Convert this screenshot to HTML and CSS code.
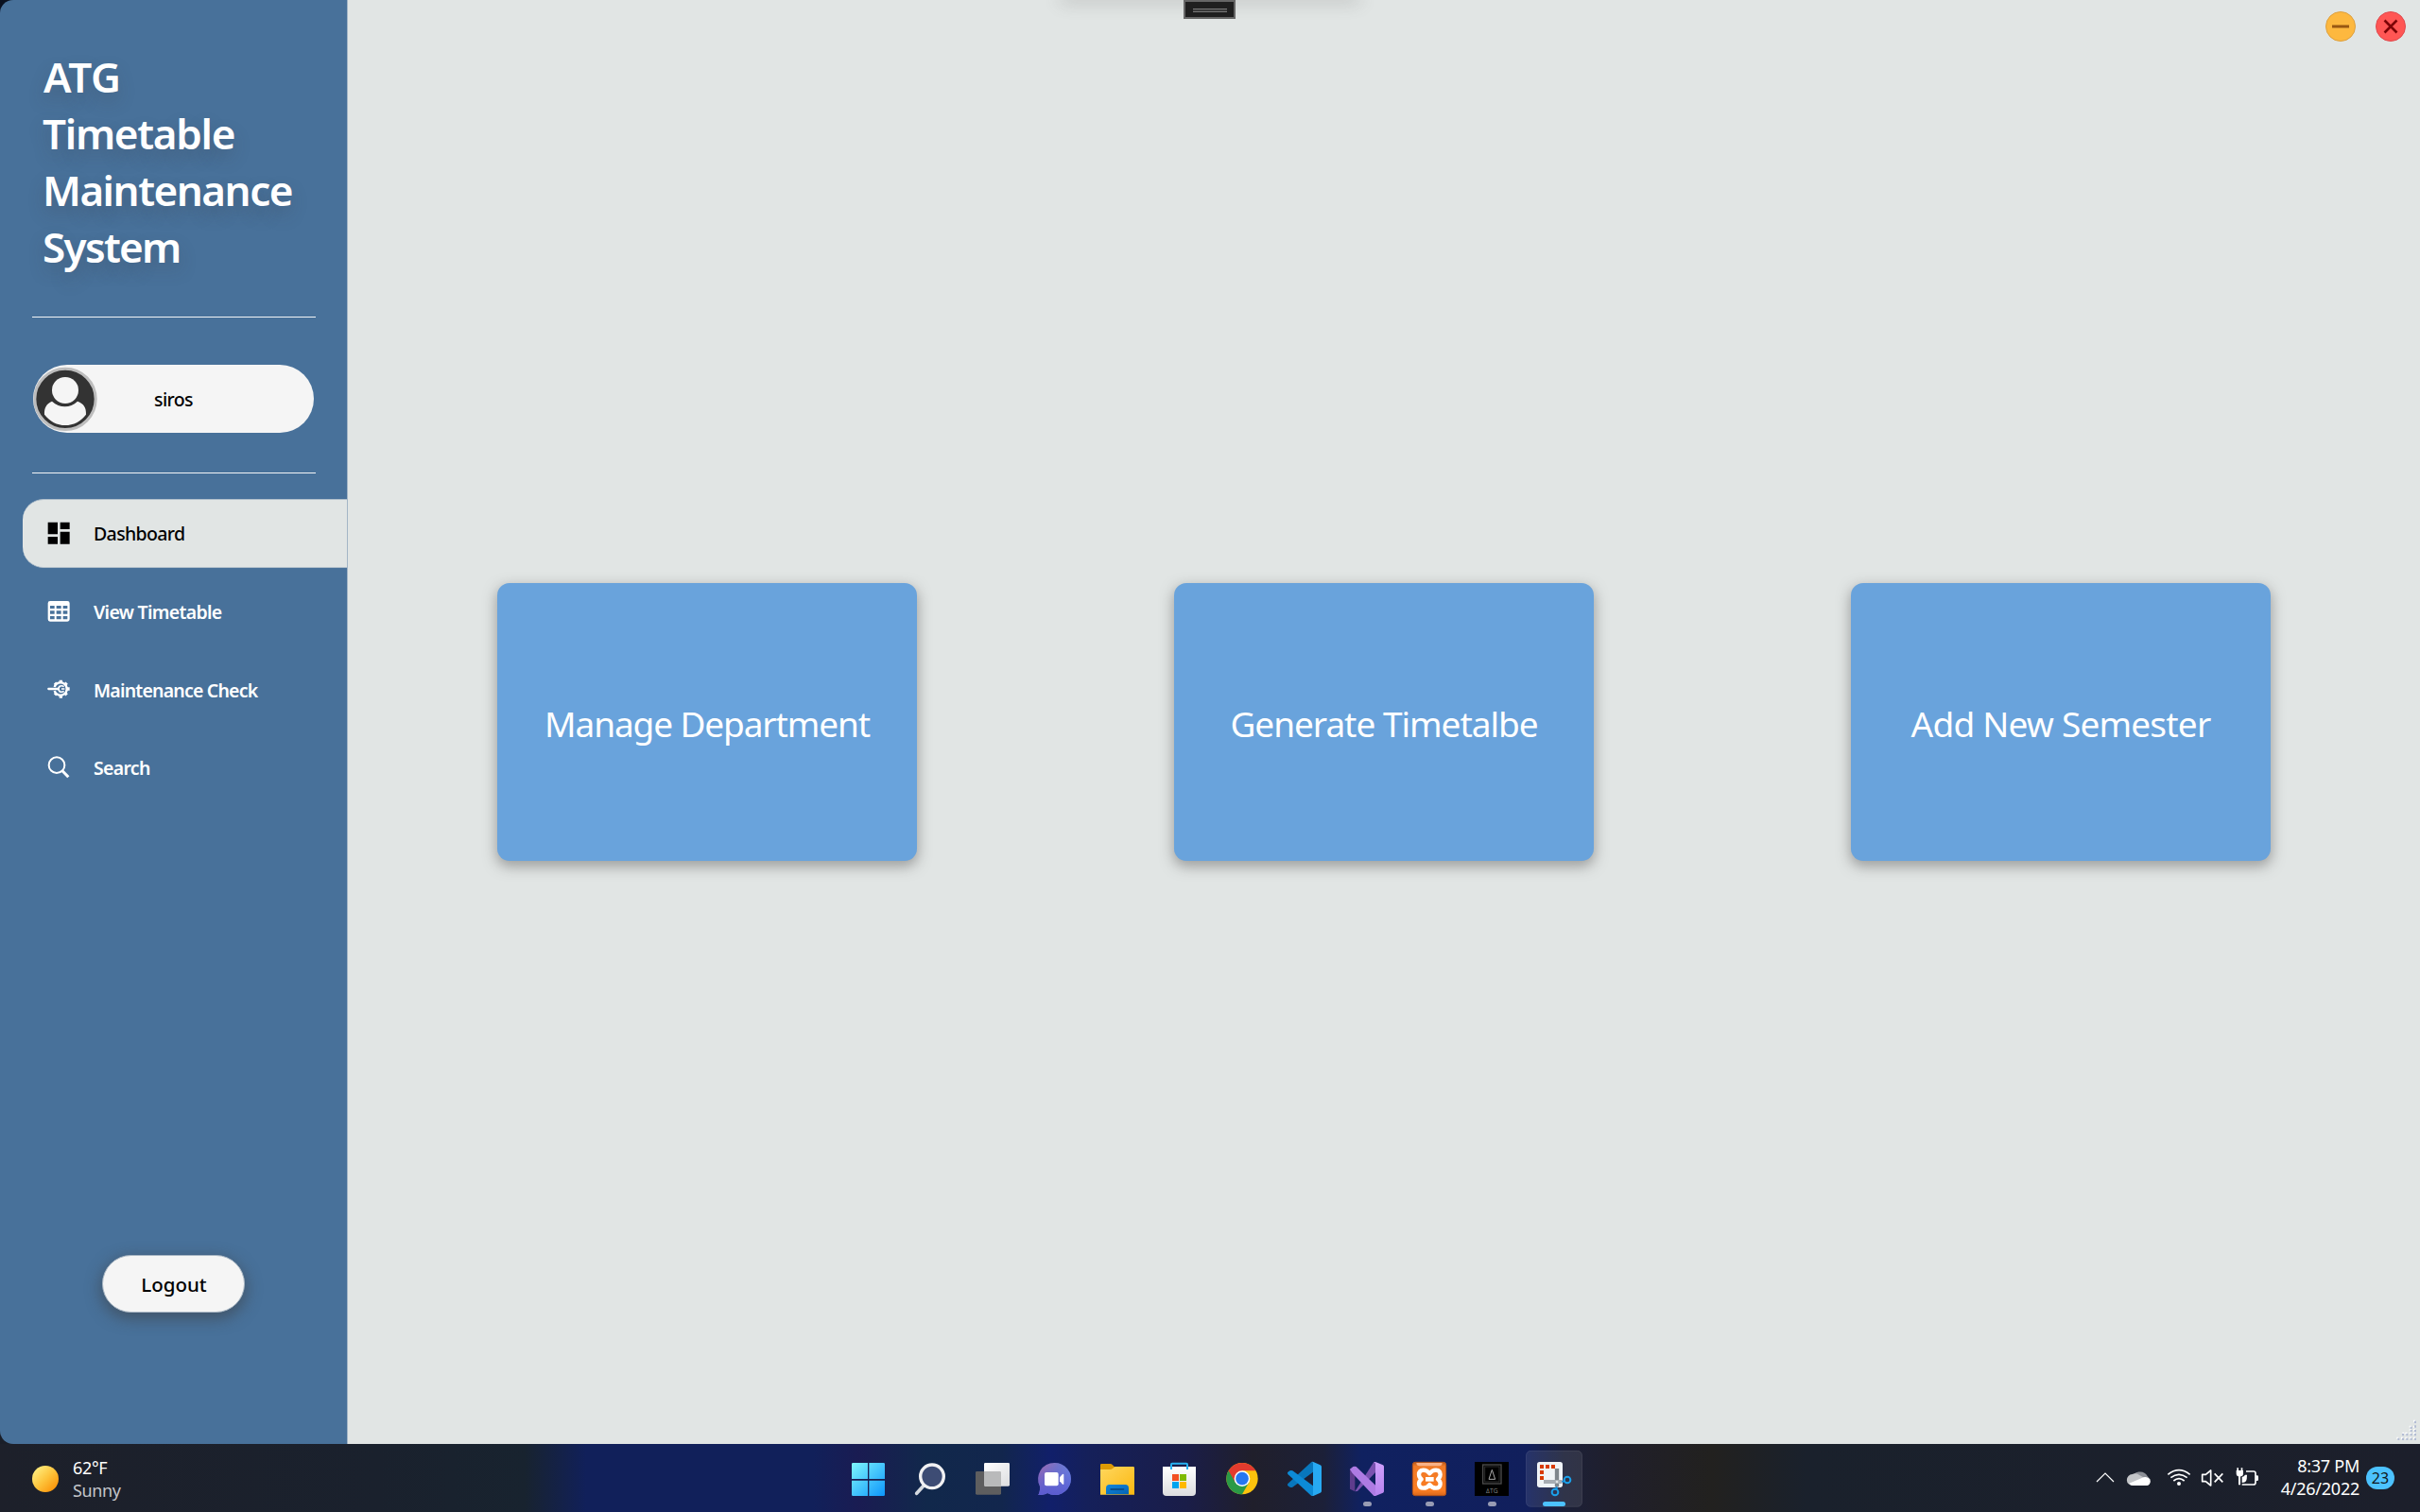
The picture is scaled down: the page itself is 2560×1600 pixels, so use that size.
FILE: index.html
```html
<!DOCTYPE html>
<html lang="en">
<head>
<meta charset="utf-8">
<title>ATG Timetable Maintenance System</title>
<link rel="stylesheet" href="styles.css">
</head>
<body>
<div class="desktop">
  <div class="window">
    <aside class="sidebar">
      <h1 class="title"><span class="t1">ATG</span><span class="t2">Timetable</span><span class="t3">Maintenance</span><span class="t4">System</span></h1>
      <div class="divider"></div>
      <div class="profile">
        <svg class="avatar" viewBox="105 1162 204 204"><circle cx="207" cy="1265" r="96.500" fill="#333" stroke="#bdbdbd" stroke-width="9"/><circle cx="207" cy="1237" r="42" fill="#f5f5f5"/><path d="M165 1272C148 1279 140 1292 141 1314C158 1336 181 1348 207 1348C233 1348 257 1336 273 1314C274 1292 266 1279 246 1272C222 1294 190 1294 165 1272Z" fill="#f5f5f5"/></svg>
        <span class="user">siros</span>
      </div>
      <div class="divider"></div>
      <nav class="menu">
        <a class="item active"><svg class="icon" viewBox="148 157 72 72"><path d="M150 159h31v38h-31zM189 159h30v22h-30zM150 205h31v23h-31zM189 189h30v39h-30z" fill="#000"/></svg><span class="m1">Dashboard</span></a>
        <a class="item"><svg class="icon" viewBox="148 405 72 72"><path fill-rule="evenodd" d="M157 408h55q7 0 7 7v51q0 7-7 7h-55q-7 0-7-7v-51q0-7 7-7zM157 423v9h14v-9zM177 423v9h15v-9zM198 423v9h14v-9zM157 439v10h14v-10zM177 439v10h15v-10zM198 439v10h14v-10zM157 456v10h14v-10zM177 456v10h15v-10zM198 456v10h14v-10z" fill="#fff"/></svg><span class="m2">View Timetable</span></a>
        <a class="item"><svg class="icon" viewBox="148 652 72 72" fill="none" stroke="#fff"><path d="M171 682A20 20 0 1 1 171 694" stroke-width="7"/><path d="M191 660v9M191 708v9M210 688h9M172 669l5 5M210 669l-5 5M172 707l5-5M210 707l-5-5" stroke-width="10"/><path d="M152 688h30" stroke-width="7" stroke-linecap="round"/><path d="M201 681q-7-5-14-1-7 8 0 16 7 4 14-1M193 688h10" stroke-width="5"/></svg><span class="m3">Maintenance Check</span></a>
        <a class="item"><svg class="icon" viewBox="148 899 72 72" fill="none" stroke="#fff"><circle cx="178" cy="928" r="25" stroke-width="6"/><path d="M196 946l19 20" stroke-width="9"/></svg><span class="m4">Search</span></a>
      </nav>
      <button class="logout"><span class="lo">Logout</span></button>
    </aside>
    <main class="main">
      <div class="controls">
        <svg class="ctl" viewBox="0 0 32 32"><circle cx="16" cy="16" r="15.500" fill="#fdb83f" stroke="#dda03f"/><path d="M7 16h18" stroke="#985712" stroke-width="3"/></svg>
        <svg class="ctl" viewBox="0 0 32 32"><circle cx="16" cy="16" r="15.500" fill="#ff5654" stroke="#df4a4e"/><path d="M9.500 9.500l13 13M22.500 9.500l-13 13" stroke="#7c0407" stroke-width="2.600"/></svg>
      </div>
      <div class="cards">
        <div class="card"><span class="c1">Manage Department</span></div>
        <div class="card"><span class="c2">Generate Timetalbe</span></div>
        <div class="card"><span class="c3">Add New Semester</span></div>
      </div>
      <svg class="grip" viewBox="1062 36 72 72"><g fill="#fff"><path d="M1119 38h6v6h-6zM1106 56h6v6h-6zM1119 56h6v6h-6zM1119 67h6v6h-6zM1106 67h6v6h-6zM1093 77h6v6h-6zM1084 77h6v6h-6zM1106 77h6v6h-6zM1119 77h6v6h-6zM1066 92h6v6h-6zM1080 92h6v6h-6zM1093 92h6v6h-6zM1106 92h6v6h-6zM1119 92h6v6h-6z"/></g><g fill="#b3bdd4"><path d="M1122 41h6v7h-6zM1122 55h6v7h-6zM1109 59h6v7h-6zM1122 69h6v7h-6zM1109 69h6v7h-6zM1083 81h6v7h-6zM1096 81h6v7h-6zM1109 81h6v7h-6zM1122 81h6v7h-6zM1069 95h6v7h-6zM1083 95h6v7h-6zM1096 95h6v7h-6zM1109 95h6v7h-6zM1122 95h6v7h-6z"/></g></svg>
    </main>
    <div class="topshade"></div>
    <div class="handle"><i></i></div>
  </div>
  <footer class="taskbar">
    <div class="weather">
      <div class="sun"></div>
      <div class="wtext"><span class="w1">62°F</span><span class="w2">Sunny</span></div>
    </div>
    <div class="apps">
      <svg viewBox="15 24 198 216"><defs><linearGradient id="win" gradientUnits="userSpaceOnUse" x1="63" y1="84" x2="168" y2="189"><stop stop-color="#7ef6fd"/><stop offset="1" stop-color="#0d96fb"/></linearGradient></defs><path d="M67 84h47v51H63V88q0-4 4-4zM118 84h46q4 0 4 4v47h-50zM63 140h51v49H67q-4 0-4-4zM118 140h50v45q0 4-4 4h-46z" fill="url(#win)"/></svg>
      <svg viewBox="213 24 198 216"><path d="M291 157l-22 24" stroke="#d5d9df" stroke-width="11" stroke-linecap="round"/><circle cx="318" cy="127" r="37" fill="#3d4c74" stroke="#f1f1f3" stroke-width="10"/></svg>
      <svg viewBox="411 24 198 216"><defs><linearGradient id="tv" x2="1" y2="1"><stop stop-color="#fff"/><stop offset="1" stop-color="#dcdde0"/></linearGradient></defs><rect x="456" y="111" width="81" height="74" rx="4" fill="#5e5e5f"/><rect x="483" y="84" width="81" height="74" rx="4" fill="url(#tv)"/><path d="M483 111h50q4 0 4 4v43h-50q-4 0-4-4z" fill="#b9babb"/></svg>
      <svg viewBox="609 24 198 216"><defs><linearGradient id="chat" x1="0" y1=".2" x2="1" y2=".6"><stop stop-color="#a06bb0"/><stop offset=".5" stop-color="#7075cb"/><stop offset="1" stop-color="#6a8ae8"/></linearGradient><linearGradient id="chat2" x2="0" y2="1"><stop stop-color="#5b5bd0" stop-opacity="0"/><stop offset="1" stop-color="#5b5bd0"/></linearGradient></defs><path d="M706 84a51 51 0 1 1-22 96q-10 6-29 6q6-10 5-28a51 51 0 0 1 46-74z" fill="url(#chat)"/><path d="M706 84a51 51 0 1 1-22 96q-10 6-29 6q6-10 5-28a51 51 0 0 1 46-74z" fill="url(#chat2)"/><rect x="675" y="114" width="44" height="43" rx="6" fill="#fff"/><path d="M723 130l9-10q4-2 4 3v26q0 5-4 3l-9-10z" fill="#fff"/></svg>
      <svg viewBox="807 24 198 216"><defs><linearGradient id="fold" x2="1" y2="1"><stop stop-color="#ffd75e"/><stop offset="1" stop-color="#fbb811"/></linearGradient><linearGradient id="fb" x2="1" y2="1"><stop stop-color="#0f86dc"/><stop offset="1" stop-color="#0563b4"/></linearGradient></defs><path d="M852 90q0-3 4-3h27q5 0 8 4l6 6v14h-45z" fill="#dd9a05"/><path d="M852 105h30q6 0 10-4l6-5h58q4 0 4 4v85H852z" fill="url(#fold)"/><path d="M870 184v-20q0-11 11-11h50q11 0 11 11v20z" fill="url(#fb)"/><rect x="883" y="165" width="45" height="6" rx="3" fill="#074f8f"/></svg>
      <svg viewBox="1005 24 198 216"><defs><linearGradient id="bag" x2="0" y2="1"><stop stop-color="#fff"/><stop offset="1" stop-color="#dcdddf"/></linearGradient></defs><path d="M1050 96h105v81q0 12-12 12h-81q-12 0-12-12z" fill="url(#bag)"/><path d="M1077 105V89q0-3 3-3h45q3 0 3 3v16" fill="none" stroke="#27b2f2" stroke-width="6"/><path d="M1080 120h21v21h-21z" fill="#f25022"/><path d="M1104 120h21v21h-21z" fill="#7fba00"/><path d="M1080 144h21v21h-21z" fill="#00a4ef"/><path d="M1104 144h21v21h-21z" fill="#ffb900"/></svg>
      <svg viewBox="3 24 198 216"><circle cx="102" cy="134" r="50" fill="#fdc30d"/><path d="M102 134L58.700 109A50 50 0 0 0 102 184L123.600 146.500z" fill="#2a9a46"/><path d="M58.700 109A50 50 0 0 1 145.300 109H102L80.400 146.500z" fill="#e33b2e"/><circle cx="102" cy="134" r="25" fill="#fff"/><circle cx="102" cy="134" r="20.500" fill="#2777f0"/></svg>
      <svg viewBox="201 24 198 216"><path d="M248 149L322 81L327 84V113L262 161Q256 164 250 159L246 155Q245 152 248 149z" fill="#0877bd"/><path d="M248 121L322 189L327 186V157L262 109Q256 106 250 111L246 115Q245 118 248 121z" fill="#0c8ad6"/><path d="M322 81Q325 80 328 81L350 91Q354 93 354 97V173Q354 177 350 179L328 189Q325 190 322 188L327 186V84z" fill="#27a9f2"/></svg>
      <svg viewBox="399 24 198 216"><defs><linearGradient id="vsr" x2="0" y2="1"><stop stop-color="#cfa0fb"/><stop offset="1" stop-color="#b883ee"/></linearGradient></defs><path d="M444 104l16-8v79l-16-8z" fill="#5f3c8c"/><path d="M460 175l60-94 6 4v28l-58 61z" fill="#7a52b0"/><path d="M444 104l10-8q5-2 10 0l62 60v31l-6 2-68-72z" fill="#ae7be3"/><path d="M520 81q3-1 7 1l22 9q3 2 3 5v78q0 3-3 5l-22 9q-4 2-7 1l5-6V86z" fill="url(#vsr)"/><rect x="486" y="207" width="27" height="15" rx="7.500" fill="#989cb4"/></svg>
      <svg viewBox="597 24 198 216"><defs><linearGradient id="xa" x2="0" y2="1"><stop stop-color="#b95a1c"/><stop offset=".12" stop-color="#f07a27"/><stop offset=".85" stop-color="#fb7d22"/><stop offset="1" stop-color="#d9661a"/></linearGradient></defs><rect x="643" y="82" width="106" height="106" rx="8" fill="url(#xa)" stroke="#b4521a" stroke-width="3"/><path d="M655 84h82q0 10-10 10h-62q-10 0-10-10z" fill="#f9b287"/><path d="M697 118Q690 107 677 107Q663 108 663 121Q663 130 671 136Q663 142 663 151Q664 164 677 164Q690 164 697 153Q704 164 717 164Q730 164 731 151Q731 142 723 136Q731 130 731 121Q731 108 717 107Q704 107 697 118Z" fill="none" stroke="#fff" stroke-width="13" stroke-linejoin="round"/><path d="M684 136h26" stroke="#fff" stroke-width="14"/><rect x="684" y="207" width="27" height="15" rx="7.500" fill="#989cb4"/></svg>
      <svg viewBox="795 24 198 216"><rect x="840" y="81" width="108" height="108" fill="#000"/><rect x="866" y="90" width="58" height="60" fill="none" stroke="#4b4b4b" stroke-width="4"/><rect x="872" y="96" width="46" height="48" fill="none" stroke="#2d2d2d" stroke-width="3"/><path d="M895 106l-10 30h20z" fill="none" stroke="#aaa" stroke-width="3"/><text x="876" y="181" class="atg" textLength="38">∆TG</text><rect x="882" y="207" width="27" height="15" rx="7.500" fill="#989cb4"/></svg>
      <svg viewBox="993 24 198 216"><rect x="1003.500" y="46" width="177" height="177" rx="14" fill="#fff" fill-opacity=".09" stroke="#fff" stroke-opacity=".1" stroke-width="3"/><rect x="1038" y="81" width="81" height="81" rx="8" fill="#f0f4f7"/><path d="M1047 90h12v12h-12zM1065 90h12v12h-12zM1083 90h12v12h-12zM1047 108h12v12h-12zM1047 126h12v12h-12z" fill="#d83b01"/><path d="M1101 102v58" stroke="#7f868c" stroke-width="13"/><path d="M1059 144h58" stroke="#a7adb3" stroke-width="12"/><circle cx="1101" cy="144" r="4" fill="#e0e3e6"/><path d="M1101 160l-3 10M1117 144l10-3" stroke="#1583cf" stroke-width="7"/><g fill="none" stroke="#1aa0ea" stroke-width="6"><circle cx="1095" cy="177" r="10"/><circle cx="1134" cy="138" r="10"/></g><rect x="1056" y="207" width="72" height="15" rx="7.500" fill="#4cc2ff"/></svg>
    </div>
    <div class="tray">
      <svg class="sys" viewBox="105 114 540 216" fill="none" stroke="#fff"><path d="M114 234l27-27 27 27" stroke-width="3.500"/><path d="M225 224A27 27 0 0 1 275 216L285 228 235 240z" fill="#8d9097" stroke="none"/><path d="M228 246a17 17 0 0 1-1-36q12-6 24 4l32 17q2 15-14 15z" fill="#c3c5c8" stroke="none"/><path d="M217 239l42-18q9-5 19 1a13 13 0 0 1-6 24h-43q-7 0-12-7z" fill="#fff" stroke="none"/><circle cx="375" cy="240" r="6" fill="#fff" stroke="none"/><path d="M358 231q17-14 34 0M349 221q26-20 52 0M340 211q35-28 70 0" stroke-width="5"/><path d="M449 211h11l16-13v48l-16-13h-11z" stroke-width="5" stroke-linejoin="round"/><path d="M488 208l26 27M514 208l-26 27" stroke-width="5"/><path d="M588 201h24q6 0 6 6v30q0 6-6 6h-37" stroke-width="5"/><path d="M619 214h4q4 0 4 4v9q0 4-4 4h-4z" fill="#fff" stroke="none"/><path d="M557 198h22v10q0 10-11 10t-11-10zM559 190h5v9h-5zM572 190h5v9h-5z" fill="#fff" stroke="none"/><path d="M567 216v28" stroke-width="6"/><path d="M575 219q7-1 10-7l6 0q0 14-3 20-3 5-13 5z" fill="#fff" stroke="none"/></svg>
      <div class="clock"><span class="k1">8:37 PM</span><span class="k2">4/26/2022</span></div>
      <div class="badge"><span class="k3">23</span></div>
    </div>
  </footer>
</div>
</body>
</html>
```
FILE: styles.css
```css
* { box-sizing: border-box; }
body { margin: 0; background: #0d1420; font-family: "Noto Sans", "Open Sans", sans-serif; }
.desktop { width: 2560px; height: 1600px; display: flex; flex-direction: column; overflow: hidden; }
.window { position: relative; flex: 0 0 1528px; display: flex; background: linear-gradient(#0a1120, #1a1e28); }

.sidebar { width: 368px; display: flex; flex-direction: column; background: #48719a; border-right: 1px solid #a3b5c6; border-radius: 14px 0 0 14px; }
.title { margin: 51px 0 44px 45px; display: flex; flex-direction: column; font-size: 44px; font-weight: 600; line-height: 60px; color: #fff; text-shadow: 0 9px 18px rgba(60, 60, 70, .28); }
.title span { align-self: flex-start; }
.t1 { margin-left: 1px; letter-spacing: -.3px; }
.t2 { letter-spacing: -1.300px; }
.t3 { letter-spacing: -1.500px; }
.t4 { letter-spacing: -1.700px; }
.divider { flex: none; width: 300px; height: 1px; margin-left: 34px; background: #f3f5f6; }
.profile { width: 297px; height: 72px; margin: 50px 0 42px 35px; display: flex; align-items: center; background: #f5f5f5; border-radius: 36px; }
.avatar { width: 68px; height: 68px; }
.user { margin-left: 60px; padding-top: 2px; font-size: 19.500px; font-weight: 500; line-height: 28px; letter-spacing: -.6px; color: #000; }
.menu { display: flex; flex-direction: column; gap: 10px; margin-top: 27px; }
.item { height: 72.500px; margin-left: 24px; padding-left: 25.500px; display: flex; align-items: center; gap: 25.500px; color: #fff; font-size: 19.500px; font-weight: 600; line-height: 28px; letter-spacing: -.7px; }
.item span { padding-top: 3px; }
.item .m1 { padding-top: 2px; }
.m3 { letter-spacing: -.8px; }
.item.active { background: #e1e5e4; color: #000; font-weight: 500; letter-spacing: -.64px; border: 1px solid #b0bfcb; border-width: 1px 0; border-radius: 22px 0 0 22px; }
.icon { width: 24px; height: 24px; }
.logout { width: 151px; height: 61px; margin: auto 0 139px 108px; padding: 1px 0 0 1px; border: 1px solid #a9b7c4; border-radius: 31px; background: #f5f5f5; color: #000; font: 500 20.500px/28px "Noto Sans", sans-serif; box-shadow: 0 5px 15px 2px rgba(60, 60, 60, .5); }

.main { position: relative; flex: 1; display: flex; flex-direction: column; background: #e1e5e4; }
.controls { height: 56px; display: flex; justify-content: flex-end; align-items: center; gap: 20.500px; padding-right: 15.500px; }
.ctl { width: 32px; height: 32px; }
.cards { flex: 1; display: flex; gap: 272px; padding: 561px 0 0 158px; }
.card { width: 444px; height: 294px; display: flex; align-items: center; justify-content: center; padding-top: 4px; border-radius: 13px; background: #69a3dc; color: #fff; font-size: 37px; line-height: 52px; box-shadow: 0 5px 14px 1px rgba(90, 90, 90, .5); }
.card span { white-space: nowrap; }
.c1 { letter-spacing: -1.120px; }
.c2 { letter-spacing: -1.020px; }
.c3 { letter-spacing: -.8px; }
.grip { position: absolute; right: 2px; bottom: 2px; width: 24px; height: 24px; }
.topshade { position: absolute; left: 1122px; top: -10px; width: 316px; height: 8px; box-shadow: 0 4px 18px rgba(90, 90, 90, .32); }
.handle { position: absolute; left: 1252px; top: 0; width: 55px; height: 20px; border: 2px solid #666; background: #1f1f1f; padding: 7px 0 0 8px; }
.handle i { display: block; width: 36px; height: 4px; background: #3a3a3a; border: 1px solid #777; border-width: 1px 0; }

.taskbar { flex: 1; display: grid; grid-template-columns: 885px 792px 1fr; background: linear-gradient(90deg, #1d202a 0, #1a212d 400px, #18232f 555px, #11205a 620px, #11205a 860px, #1a1c52 910px, #11284b 980px, #12264d 1060px, #111f6a 1112px, #15205a 1150px, #1a1d48 1255px, #201f2b 1325px, #1c2038 1400px, #102160 1440px, #111f5c 1615px, #1c2038 1655px, #201f2a 1715px, #22211f 1810px, #1a212c 1910px, #1c1f2b 2560px); }
.weather { display: flex; padding-left: 34px; gap: 15px; }
.sun { width: 28px; height: 28px; margin-top: 23px; border-radius: 50%; background: linear-gradient(135deg, #ffee80 10%, #fdc43c 50%, #fb8c00 95%); }
.wtext { display: flex; flex-direction: column; padding-top: 13px; font-size: 18px; line-height: 24px; letter-spacing: -.35px; color: #fff; }
.wtext span { align-self: flex-start; }
.w2 { color: #c3c5c9; }
.apps { display: flex; }
.apps svg { width: 66px; height: 72px; }
.atg { font: 20px "Open Sans", sans-serif; fill: #888; }
.tray { display: flex; padding-left: 538px; }
.sys { width: 180px; height: 72px; }
.clock { width: 101px; display: flex; flex-direction: column; align-items: flex-end; padding-top: 12px; color: #fff; font-size: 18px; line-height: 23.500px; letter-spacing: -.25px; }
.badge { width: 30px; height: 24px; margin: 24px 0 0 7px; border-radius: 12px; background: #4cc2ff; color: #101820; font-size: 16px; line-height: 24px; text-align: center; }
```
